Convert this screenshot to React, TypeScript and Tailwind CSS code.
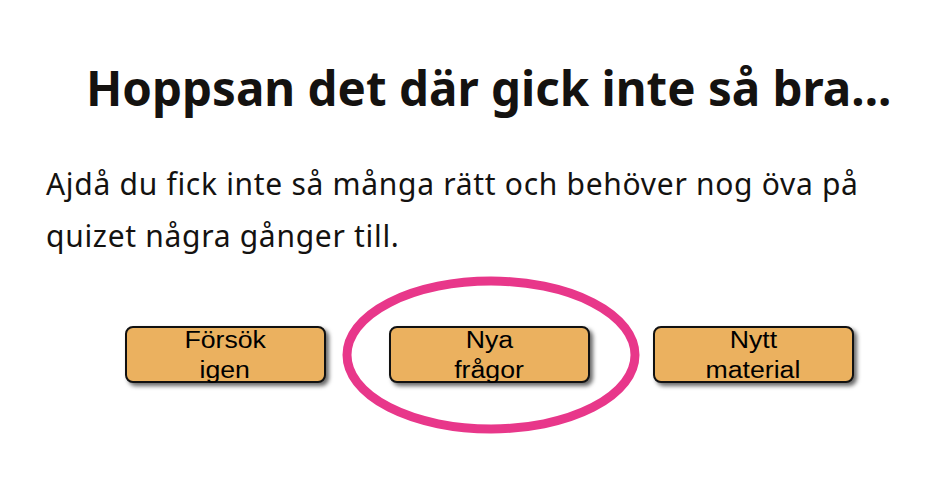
export default function App() {
  const buttons = [
    { top: 'Försök', bottom: 'igen' },
    { top: 'Nya', bottom: 'frågor' },
    { top: 'Nytt', bottom: 'material' },
  ]

  return (
    <div className="w-[948px] h-[478px] bg-white text-[#141210] overflow-hidden">
      <h1 className="pt-[60px] pl-[86px] text-[47.5px] leading-[56px] font-bold font-['Noto_Sans',sans-serif] whitespace-nowrap">
        Hoppsan det där gick inte så bra...
      </h1>
      <p className="mt-[42px] pl-[46px] text-[30px] leading-[52px] tracking-[0.7px] font-['Noto_Sans',sans-serif] whitespace-nowrap">
        Ajdå du fick inte så många rätt och behöver nog öva på
        <br />
        quizet några gånger till.
      </p>
      <div className="relative mt-[64px] flex justify-center gap-[63px] pl-[30px]">
        {buttons.map((b) => (
          <button
            key={b.top}
            className="relative z-10 w-[201px] h-[57px] flex flex-col items-center justify-center rounded-[8px] border-2 border-[#111] bg-[#ebb15f] shadow-[3px_3px_4px_rgba(0,0,0,0.6)] font-['Liberation_Sans',Arial,sans-serif] text-[23px] leading-[30px] text-black"
          >
            <span className="scale-x-[1.16]">{b.top}</span>
            <span className="scale-x-[1.16]">{b.bottom}</span>
          </button>
        ))}
        <svg
          className="absolute left-[342px] top-[-50px] z-20 pointer-events-none"
          width="300"
          height="160"
          viewBox="0 0 300 160"
        >
          <ellipse cx="149" cy="79" rx="144" ry="74" fill="none" stroke="#e8378a" strokeWidth="9" />
        </svg>
      </div>
    </div>
  )
}
